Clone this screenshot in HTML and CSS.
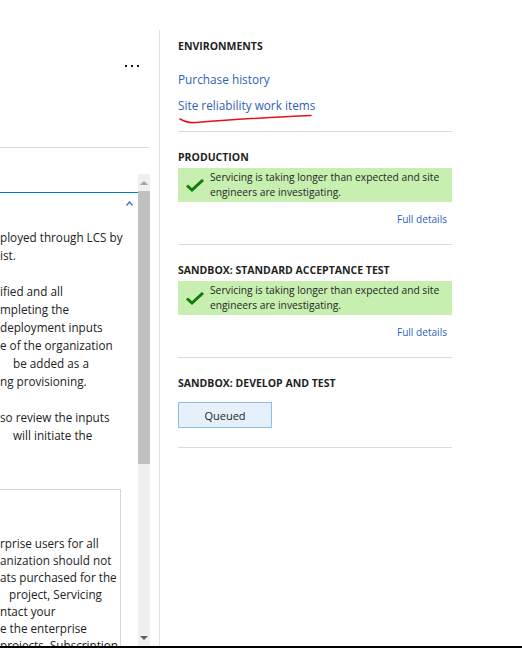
FILE: index.html
```html
<!DOCTYPE html>
<html lang="en">
<head>
  <meta charset="UTF-8" />
  <title>Environments</title>
  <link rel="stylesheet" href="styles.css">
</head>
<body>
  <div class="page">
    <div class="left">
      <div class="left-top">
        <div class="more"><span></span><span></span><span></span></div>
      </div>
      <div class="left-body">
        <div class="scroll">
          <div class="scroll-content">
            <div class="tab-line"></div>
            <div class="chevron-row">
              <svg width="7" height="5" viewBox="0 0 7 5"><path d="M0.5 4.5 L3.5 1 L6.5 4.5" fill="none" stroke="#3a6fc4" stroke-width="1.3"/></svg>
            </div>
            <div class="para">
              <div class="ln">ployed through LCS by</div>
              <div class="ln">ist.</div>
            </div>
            <div class="para">
              <div class="ln">ified and all</div>
              <div class="ln">mpleting the</div>
              <div class="ln">deployment inputs</div>
              <div class="ln">e of the organization</div>
              <div class="ln indent">be added as a</div>
              <div class="ln">ng provisioning.</div>
            </div>
            <div class="para">
              <div class="ln">so review the inputs</div>
              <div class="ln indent">will initiate the</div>
            </div>
            <div class="inner-box">
              <div class="ln">rprise users for all</div>
              <div class="ln">anization should not</div>
              <div class="ln">ats purchased for the</div>
              <div class="ln indent-sm">project, Servicing</div>
              <div class="ln">ntact your</div>
              <div class="ln">e the enterprise</div>
              <div class="ln">projects. Subscription</div>
            </div>
          </div>
          <div class="scrollbar">
            <div class="sb-arrow up"></div>
            <div class="sb-thumb"></div>
            <div class="sb-track"></div>
            <div class="sb-arrow down"></div>
          </div>
        </div>
      </div>
    </div>

    <div class="right">
      <div class="section env">
        <h2>ENVIRONMENTS</h2>
        <a class="link first" href="#">Purchase history</a>
        <a class="link" href="#">Site reliability work items</a>
        <svg class="scribble" width="136" height="12" viewBox="0 0 136 12"><path d="M1 5 C6 8, 10 9, 16 8.5 C50 6, 90 3, 132 1.5" fill="none" stroke="#e8101c" stroke-width="1.6" stroke-linecap="round"/></svg>
      </div>

      <div class="section">
        <h2>PRODUCTION</h2>
        <div class="status">
          <svg width="18" height="13" viewBox="0 0 18 13"><path d="M1 6.5 L6 11 L17 1" fill="none" stroke="#107c10" stroke-width="3"/></svg>
          <p>Servicing is taking longer than expected and site engineers are investigating.</p>
        </div>
        <div class="details"><a href="#">Full details</a></div>
      </div>

      <div class="section">
        <h2>SANDBOX: STANDARD ACCEPTANCE TEST</h2>
        <div class="status">
          <svg width="18" height="13" viewBox="0 0 18 13"><path d="M1 6.5 L6 11 L17 1" fill="none" stroke="#107c10" stroke-width="3"/></svg>
          <p>Servicing is taking longer than expected and site engineers are investigating.</p>
        </div>
        <div class="details"><a href="#">Full details</a></div>
      </div>

      <div class="section last">
        <h2>SANDBOX: DEVELOP AND TEST</h2>
        <button class="queued">Queued</button>
      </div>
    </div>
  </div>
  <div class="bottom-bar"></div>
</body>
</html>
```

FILE: styles.css
```css
* {
  margin: 0;
  padding: 0;
  box-sizing: border-box;
  font-family: 'Open Sans', 'Noto Sans', sans-serif;
}

body {
  background: #fff;
  color: #262626;
  font-size: 12px;
  width: 522px;
  height: 648px;
  overflow: hidden;
}

.page {
  display: flex;
  height: 646px;
}

.bottom-bar {
  height: 2px;
  background: #000;
}

/* left, half hidden panel */

.left {
  width: 150px;
  margin-right: 9px;
  display: flex;
  flex-direction: column;
}

.left-top {
  height: 148px;
  border-bottom: 1px solid #dcdcdc;
  padding: 65px 11px 0 0;
  display: flex;
  justify-content: flex-end;
  align-items: flex-start;
}

.more {
  display: flex;
  gap: 4px;
}

.more span {
  width: 2px;
  height: 2px;
  background: #111;
}

.left-body {
  flex: 1;
  padding-top: 26px;
  overflow: hidden;
}

.scroll {
  display: flex;
  height: 100%;
}

.scroll-content {
  width: 138px;
  overflow: hidden;
  font-size: 11.7px;
  color: #222;
}

.tab-line {
  margin-top: 18px;
  height: 1px;
  background: #0078d4;
}

.chevron-row {
  height: 20px;
  padding: 8px 0 0 126px;
}

.chevron-row svg {
  display: block;
}

.para {
  margin-top: 15px;
  line-height: 18px;
}

.para + .para {
  margin-top: 18px;
}

.ln {
  white-space: nowrap;
}

.ln.indent {
  margin-left: 13px;
}

.ln.indent-sm {
  margin-left: 9px;
}

.inner-box {
  margin-top: 45px;
  width: 121px;
  height: 200px;
  border-top: 1px solid #d6d6d6;
  border-right: 1px solid #d6d6d6;
  padding-top: 45px;
  line-height: 17px;
  overflow: hidden;
}

.scrollbar {
  width: 12px;
  background: #f0f0f0;
  display: flex;
  flex-direction: column;
}

.sb-arrow {
  height: 17px;
  display: flex;
  justify-content: center;
  align-items: center;
}

.sb-arrow::before {
  content: "";
  border-left: 4px solid transparent;
  border-right: 4px solid transparent;
}

.sb-arrow.up::before {
  border-bottom: 4px solid #a3a3a3;
}

.sb-arrow.down::before {
  border-top: 4px solid #606060;
}

.sb-thumb {
  height: 273px;
  background: #c1c1c1;
}

.sb-track {
  flex: 1;
}

/* right, environments panel */

.right {
  margin-top: 30px;
  border-left: 1px solid #e1e1e1;
  padding: 0 70px 0 18px;
  flex: 1;
}

.section {
  position: relative;
  border-bottom: 1px solid #dadada;
  padding: 17px 0;
}

.section.env {
  padding: 8px 0 17px;
}

.section.last {
  padding-bottom: 19px;
}

h2 {
  font-size: 10.5px;
  font-weight: 700;
  line-height: 16px;
  color: #1f1f1f;
}

.link {
  display: block;
  font-size: 11.8px;
  line-height: 18px;
  color: #2f5fb8;
  text-decoration: none;
  margin-top: 8px;
}

.link.first {
  margin-top: 16px;
}

.scribble {
  position: absolute;
  left: 1px;
  top: 84px;
}

.status {
  margin-top: 3px;
  height: 34px;
  background: #c6efb0;
  padding: 0 6px 0 8px;
  display: flex;
  align-items: center;
  gap: 6px;
}

.status svg {
  flex-shrink: 0;
  display: block;
}

.status p {
  font-size: 10.25px;
  line-height: 15px;
  color: #262626;
}

.details {
  margin-top: 9px;
  height: 16px;
  text-align: right;
  padding-right: 5px;
  font-size: 10.1px;
  line-height: 16px;
}

.details a {
  color: #2f5fb8;
  text-decoration: none;
}

.queued {
  margin-top: 11px;
  width: 94px;
  height: 26px;
  background: #e5f0fa;
  border: 1px solid #8cbde9;
  font-size: 11px;
  color: #1f1f1f;
  display: block;
}
```
